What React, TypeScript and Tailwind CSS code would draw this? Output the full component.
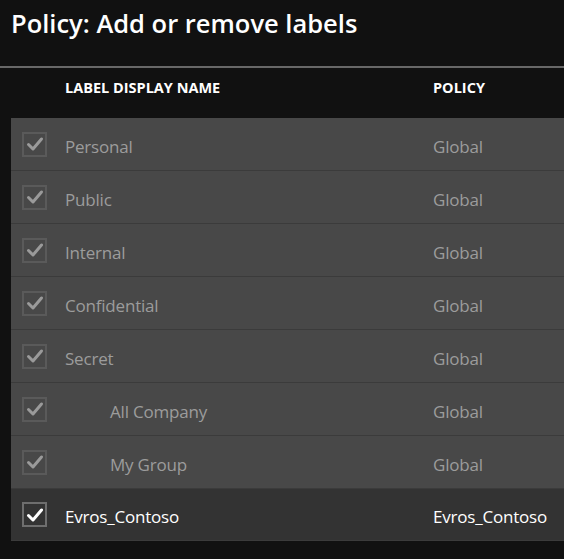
import React from "react";

const rows = [
  { name: "Personal", policy: "Global", indent: false },
  { name: "Public", policy: "Global", indent: false },
  { name: "Internal", policy: "Global", indent: false },
  { name: "Confidential", policy: "Global", indent: false },
  { name: "Secret", policy: "Global", indent: false },
  { name: "All Company", policy: "Global", indent: true },
  { name: "My Group", policy: "Global", indent: true },
];

function Check({ active }: { active: boolean }) {
  return (
    <div
      className={
        "w-[25px] h-[25px] flex items-center justify-center border-2 " +
        (active ? "border-[#6e6e6e]" : "border-[#5a5a5a]")
      }
    >
      <svg width="18" height="16" viewBox="0 0 18 16">
        <path
          d="M2.5 8.5 L7 13 L15.5 3"
          fill="none"
          stroke={active ? "#ffffff" : "#9a9a9a"}
          strokeWidth="3"
          strokeLinecap="round"
          strokeLinejoin="round"
        />
      </svg>
    </div>
  );
}

export default function App() {
  return (
    <div
      className="w-[564px] h-[559px] bg-[#111111] overflow-hidden"
      style={{ fontFamily: '"Open Sans", "Noto Sans", sans-serif' }}
    >
      <div className="h-[66px] pl-[11px] pt-[6px]">
        <h1 className="text-[25.5px] font-semibold text-white leading-[34px]">
          Policy: Add or remove labels
        </h1>
      </div>
      <div className="h-[2px] bg-[#686868]" />
      <div className="h-[50px] flex items-start pt-[10px] leading-[20px] text-[14.5px] font-bold text-white">
        <div className="w-[433px] pl-[65px]">LABEL DISPLAY NAME</div>
        <div>POLICY</div>
      </div>
      <div className="ml-[11px] w-[600px]">
        {rows.map((r) => (
          <div
            key={r.name}
            className="h-[53px] flex items-center bg-[#484848] border-b border-[#3b3b3b] text-[#9c9c9c] text-[17px] tracking-[-0.2px]"
          >
            <div className="w-[54px] pl-[11px]">
              <Check active={false} />
            </div>
            <div className={"w-[368px] pt-[5px] " + (r.indent ? "pl-[45px]" : "")}>{r.name}</div>
            <div className="pt-[5px]">{r.policy}</div>
          </div>
        ))}
        <div className="h-[52px] flex items-center bg-[#333333] border-b border-[#3b3b3b] text-white text-[17px] tracking-[-0.2px]">
          <div className="w-[54px] pl-[11px]">
            <Check active={true} />
          </div>
          <div className="w-[368px] pt-[5px]">Evros_Contoso</div>
          <div className="pt-[5px]">Evros_Contoso</div>
        </div>
      </div>
    </div>
  );
}
